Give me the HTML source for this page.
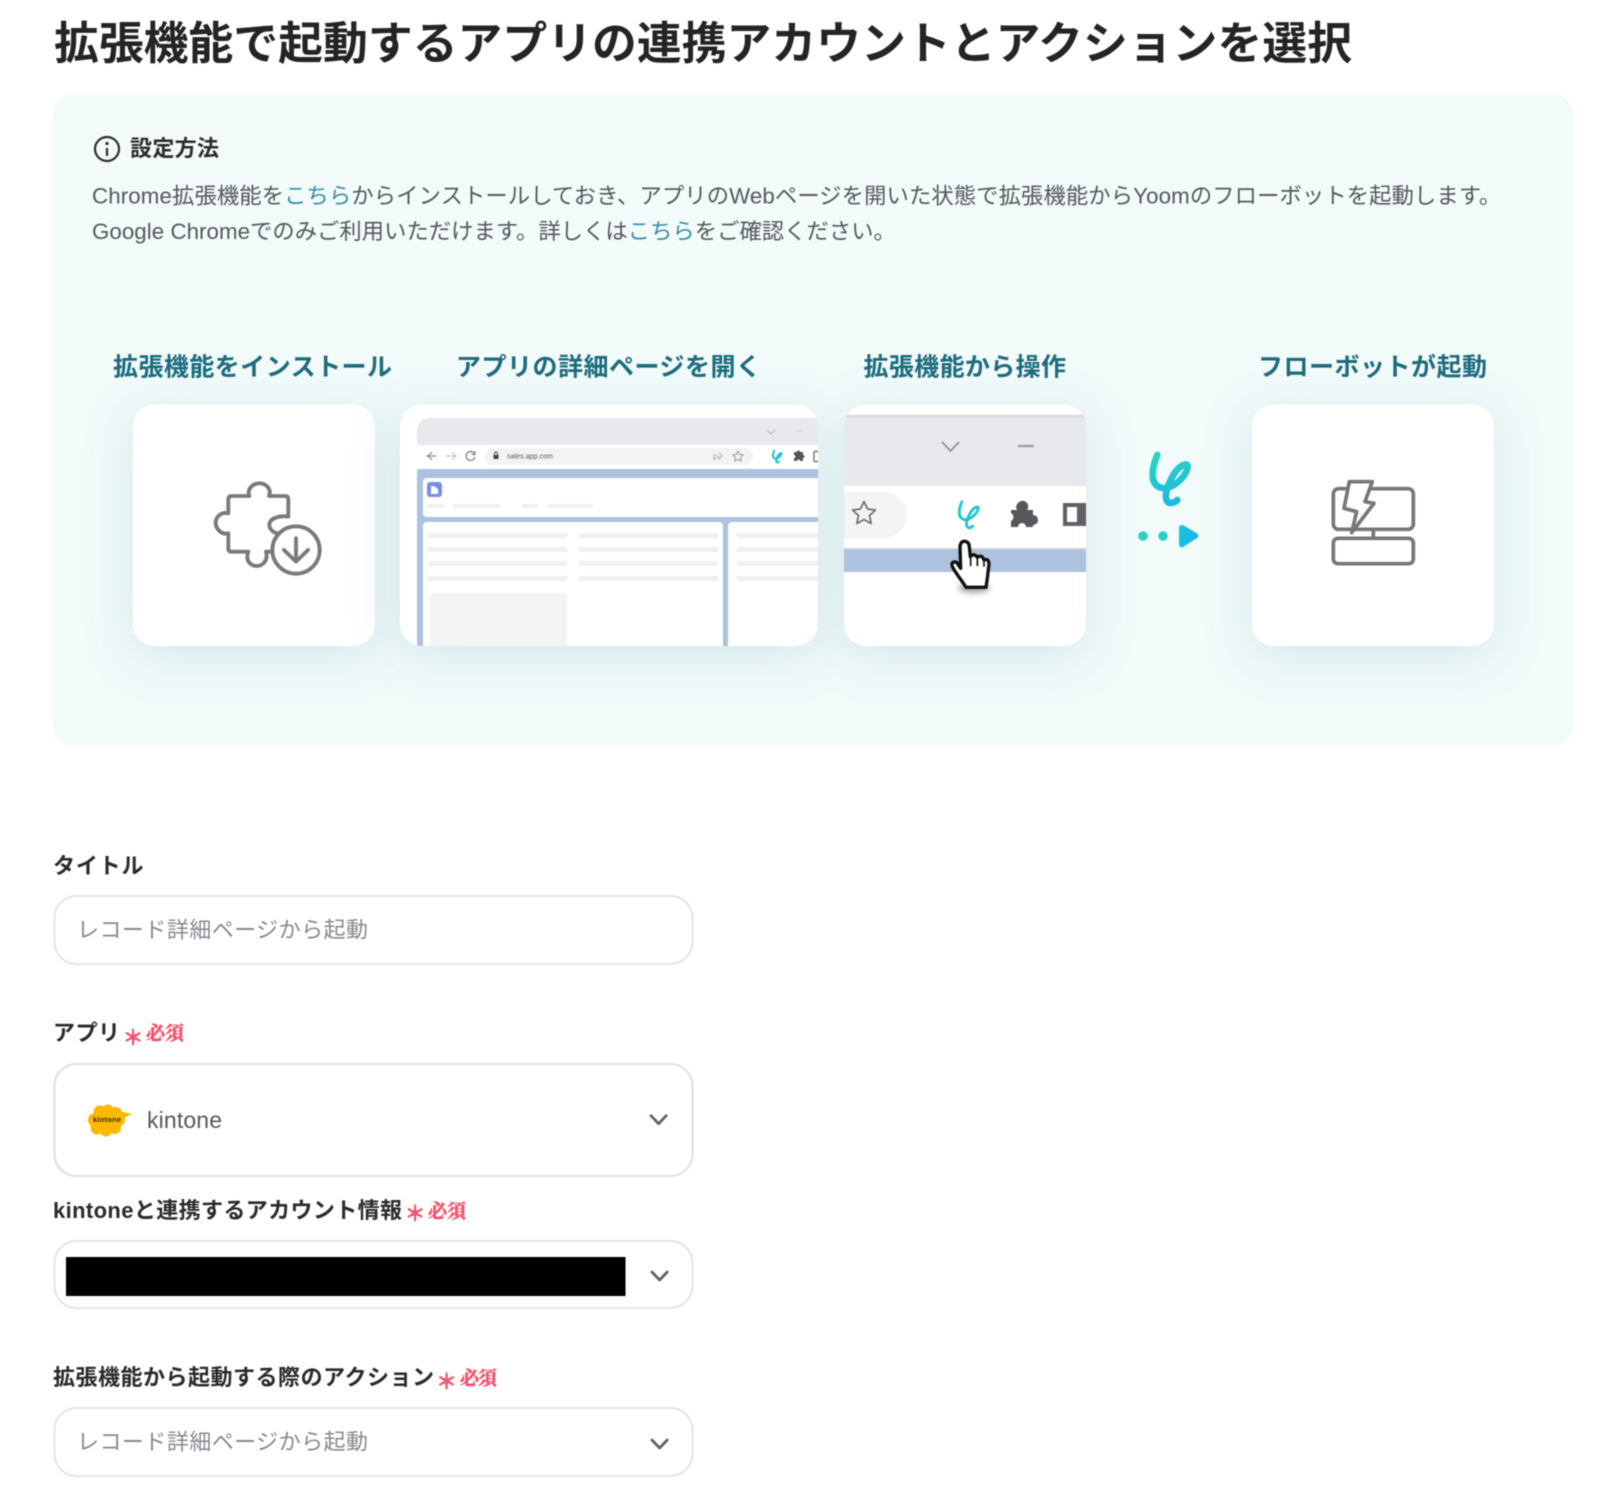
<!DOCTYPE html>
<html lang="ja"><head><meta charset="utf-8"><title>拡張機能で起動するアプリの連携アカウントとアクションを選択</title>
<style>
html,body{margin:0;padding:0;background:#fff;width:1600px;height:1495px;overflow:hidden}
svg{display:block;filter:blur(.5px)}
text{font-family:"Liberation Sans","Noto Sans CJK JP",sans-serif;white-space:pre}
.b{font-weight:700}
.step{font-size:25px;font-weight:700;fill:#1c6c7e}
.lab{font-size:22px;font-weight:700;fill:#2a2a2a}
.ph{font-size:22px;fill:#858a8f}
.req{font-family:"Liberation Serif","Noto Serif CJK SC",serif;font-size:19px;font-weight:700;fill:#fb4f6c;stroke:#fb4f6c;stroke-width:.5}
.ast{font-family:"Noto Sans CJK JP",sans-serif;font-size:21px;font-weight:700;fill:#fb4f6c;stroke:#fb4f6c;stroke-width:.4}
.box{fill:#fff;stroke:#e2e5e8;stroke-width:2}
.chev{fill:none;stroke:#5f6468;stroke-width:2.8;stroke-linecap:round;stroke-linejoin:round}
.ln{fill:#f0f0f0}
</style></head><body>
<svg width="1600" height="1495" viewBox="0 0 1600 1495" xmlns="http://www.w3.org/2000/svg">
<defs>
<filter id="sh" x="-60%" y="-60%" width="220%" height="230%"><feDropShadow dx="0" dy="10" stdDeviation="24" flood-color="#4f9aa3" flood-opacity=".19"/></filter>
<filter id="hs" x="-50%" y="-50%" width="200%" height="200%"><feGaussianBlur stdDeviation="3"/></filter>
<linearGradient id="yg" gradientUnits="userSpaceOnUse" x1="100" y1="35" x2="150" y2="195"><stop offset="0" stop-color="#2dd6bb"/><stop offset="1" stop-color="#1bb9e6"/></linearGradient>
<linearGradient id="tg" x1="0" y1="0" x2="1" y2="1"><stop offset="0" stop-color="#1bc6dc"/><stop offset="1" stop-color="#1ab2ea"/></linearGradient>
<clipPath id="c2"><rect x="400" y="404.500" width="418" height="241.500" rx="22"/></clipPath>
<clipPath id="c3"><rect x="844" y="404.500" width="242" height="241.500" rx="22"/></clipPath>
</defs>

<text x="54" y="59" class="b" font-size="44.8" fill="#242424" textLength="1298">拡張機能で起動するアプリの連携アカウントとアクションを選択</text>

<rect x="53" y="94" width="1520" height="651.500" rx="20" fill="#f2fafa"/>

<circle cx="107" cy="149" r="12" fill="none" stroke="#2f2f2f" stroke-width="2.2"/>
<circle cx="107" cy="143.5" r="1.6" fill="#2f2f2f"/><path d="M107 148v8" stroke="#2f2f2f" stroke-width="2.2" fill="none"/>
<text x="130" y="156" class="b" font-size="22" fill="#2c2c2c" textLength="89">設定方法</text>

<text x="92" y="203.5" font-size="22.3" letter-spacing=".12" fill="#55595c">Chrome拡張機能を<tspan fill="#3a8fa8">こちら</tspan>からインストールしておき、アプリのWebページを開いた状態で拡張機能からYoomのフローボットを起動します。</text>
<text x="92" y="239" font-size="22.3" letter-spacing=".05" fill="#55595c">Google Chromeでのみご利用いただけます。詳しくは<tspan fill="#3a8fa8">こちら</tspan>をご確認ください。</text>

<text x="113" y="375.5" class="step" textLength="279">拡張機能をインストール</text>
<text x="456" y="375.5" class="step" textLength="305">アプリの詳細ページを開く</text>
<text x="863.5" y="375.5" class="step" textLength="202.5">拡張機能から操作</text>
<text x="1258" y="375.5" class="step" textLength="229">フローボットが起動</text>

<!-- cards -->
<rect x="133" y="404.500" width="242" height="241.500" rx="22" fill="#fff" filter="url(#sh)"/>
<rect x="400" y="404.500" width="418" height="241.500" rx="22" fill="#fff" filter="url(#sh)"/>
<rect x="844" y="404.500" width="242" height="241.500" rx="22" fill="#fff" filter="url(#sh)"/>
<rect x="1252" y="404.500" width="242" height="241.500" rx="22" fill="#fff" filter="url(#sh)"/>

<!-- puzzle download icon -->
<g transform="translate(200 470) scale(.33333)" fill="none" stroke="#7a7a7a" stroke-width="11.5" stroke-linejoin="round" stroke-linecap="round">
<path d="M212 245H198C205 270 190 288 170 288C150 288 135 270 145 245H95Q85 245 85 235V190C65 195 47 178 47 158C47 140 65 125 85 130V88Q85 78 95 78H148C140 55 160 40 178 40C196 40 216 55 207 78H255Q265 78 265 88V140C240 135 208 145 208 165C208 178 222 190 235 190"/>
<circle cx="288" cy="240" r="71"/>
<path d="M288 205V272M252 240L288 275L324 240"/>
</g>

<!-- browser card -->
<g clip-path="url(#c2)">
<path d="M417 646V432Q417 418 431 418H818V646Z" fill="#e8e9ec"/>
<rect x="417" y="445" width="401" height="24" fill="#fff"/>
<rect x="417" y="469" width="401" height="177" fill="#adc2de"/>
<path d="M423 513V482Q423 478 427 478H818V517H427Q423 517 423 513Z" fill="#fff"/>
<rect x="423" y="522" width="300" height="130" rx="4" fill="#fff"/>
<rect x="728" y="522" width="100" height="130" rx="4" fill="#fff"/>
<rect x="485" y="448" width="268" height="17" rx="8.5" fill="#f2f3f5"/>
<text x="507" y="458.5" font-size="7" fill="#555" textLength="46">sales.app.com</text>
<path d="M426 456h10m-4-4l-4 4 4 4" fill="none" stroke="#8b8b8b" stroke-width="1.2"/>
<path d="M456 456h-10m6-4l4 4-4 4" fill="none" stroke="#c2c2c2" stroke-width="1.2"/>
<path d="M474 453a4.5 4.5 0 1 0 1 4M475 451v3.5h-3.5" fill="none" stroke="#7c7c7c" stroke-width="1.2"/>
<rect x="493.5" y="455" width="5" height="4" fill="#444"/><path d="M494.5 455v-1.5a1.5 1.5 0 0 1 3 0V455" fill="none" stroke="#444"/>
<path d="M714 460v-5h3m2-2l3 3-3 3v-2q-4 0-5 3" fill="none" stroke="#b0b0b0" stroke-width="1"/>
<path d="M738 451l1.6 3.3 3.6.5-2.6 2.5.6 3.6-3.2-1.7-3.2 1.7.6-3.6-2.6-2.5 3.6-.5z" fill="none" stroke="#9a9a9a"/>
<path d="M767 430l4 4 4-4" fill="none" stroke="#b9b9b9" stroke-width="1.2"/>
<path d="M796 431h6" stroke="#d0d0d0" stroke-width="1.2"/>
<g transform="translate(765.2 447.2) scale(.08)"><path d="M112 45C95 85 90 125 115 140C150 160 205 105 203 78C200 65 175 80 160 105C140 140 130 175 145 187C155 192 165 187 172 180" fill="none" stroke="#26c4d6" stroke-width="26" stroke-linecap="round"/></g>
<path d="M794 452h3a1.5 1.5 0 0 1 3 0h3v3a1.5 1.5 0 0 1 0 3v3h-3a1.5 1.5 0 0 0-3 0h-3v-3a1.5 1.5 0 0 0 0-3z" fill="#555"/>
<rect x="814" y="451.5" width="8" height="10" rx="1" fill="none" stroke="#777" stroke-width="1.4"/>
<rect x="427" y="482" width="15" height="15" rx="3" fill="#7b8ce8"/><path d="M431 486h3l4 3v5h-7z" fill="#fff"/>
<g class="ln">
<rect x="428" y="504" width="17" height="4" rx="2"/><rect x="453" y="504" width="47" height="4" rx="2"/><rect x="522" y="504" width="16" height="4" rx="2"/><rect x="547" y="504" width="46" height="4" rx="2"/>
<rect x="428" y="533" width="139" height="5"/><rect x="579" y="533" width="139" height="5"/><rect x="737" y="533" width="85" height="5"/>
<rect x="428" y="547" width="139" height="5"/><rect x="579" y="547" width="139" height="5"/><rect x="737" y="547" width="85" height="5"/>
<rect x="428" y="561" width="139" height="5"/><rect x="579" y="561" width="139" height="5"/><rect x="737" y="561" width="85" height="5"/>
<rect x="428" y="576" width="139" height="5"/><rect x="579" y="576" width="139" height="5"/><rect x="737" y="576" width="85" height="5"/>
</g>
<rect x="430" y="593" width="137" height="60" fill="#f3f3f3"/>
</g>

<!-- toolbar card -->
<g clip-path="url(#c3)">
<rect x="843" y="415" width="243" height="71" fill="#e8e9ec"/>
<rect x="843" y="415" width="243" height="2" fill="#d5d5d6"/>
<path d="M942 442l8.500 9 8.500-9" fill="none" stroke="#8f9092" stroke-width="1.700"/>
<path d="M1018 446h16" stroke="#9b9c9e" stroke-width="2.200"/>
<path d="M843 492H884A23 23 0 0 1 884 538H843Z" fill="#f3f4f6"/>
<path d="M864 501.500l3.500 7.500 8 1-6 5.500 1.600 8-7.100-4-7.100 4 1.600-8-6-5.500 8-1z" fill="none" stroke="#6f7072" stroke-width="1.700" stroke-linejoin="round"/>
<g transform="translate(941.700 493.700) scale(.18)"><path d="M112 45C95 85 90 125 115 140C150 160 205 105 203 78C200 65 175 80 160 105C140 140 130 175 145 187C155 192 165 187 172 180" fill="none" stroke="#22c4d6" stroke-width="16" stroke-linecap="round"/></g>
<path d="M1011 510h6a5.500 5.500 0 0 1 1-7 5.500 5.500 0 0 1 9 7h6v5a5 5 0 0 1 3 9 5 5 0 0 1-3 1v2h-7a4 4 0 0 0-8 0h-7v-6a4.500 4.500 0 0 0 0-8z" fill="#56585c"/>
<rect x="1063" y="503" width="23" height="23" fill="#5f6166"/><rect x="1067" y="507" width="10" height="15" fill="#fff"/>
<rect x="843" y="549" width="243" height="23" fill="#adc2de"/>
<rect x="843" y="548" width="243" height="1.500" fill="#d3d5d8"/>
</g>
<ellipse cx="974" cy="588" rx="16" ry="5" fill="#000" opacity=".35" filter="url(#hs)"/>
<g transform="translate(840 400) scale(.33333)">
<path d="M362 505L360 440Q362 422 375 424Q387 426 388 440L391 470Q402 458 412 472Q425 462 432 480Q446 474 447 492L442 535L438 562H378C365 540 350 525 337 500Q332 482 350 487Z" fill="#fff" stroke="#111" stroke-width="10" stroke-linejoin="round"/>
<path d="M392 472V498M412 474V498M432 482V500" fill="none" stroke="#111" stroke-width="5"/>
</g>

<!-- yoom logo + arrow -->
<g transform="translate(1120 440) scale(.33333)"><path d="M112 45C95 85 90 125 115 140C150 160 205 105 203 78C200 65 175 80 160 105C140 140 130 175 145 187C155 192 165 187 172 180" fill="none" stroke="url(#yg)" stroke-width="20" stroke-linecap="round" stroke-linejoin="round"/></g>
<circle cx="1143" cy="536" r="4.800" fill="#2ad2c6"/><circle cx="1163" cy="536" r="4.800" fill="#2ad2c6"/>
<path d="M1182 525Q1179 525 1179 528V544Q1179 548 1183 547L1197 538Q1200 535.500 1197 533.500L1184 525.500Q1183 525 1182 525Z" fill="url(#tg)"/>

<!-- bolt server icon -->
<g transform="translate(1120 440) scale(.33333)" fill="none" stroke="#777" stroke-width="11" stroke-linejoin="round">
<rect x="640" y="146" width="240" height="122" rx="16"/>
<rect x="640" y="295" width="240" height="76" rx="14"/>
<path d="M760 268V295"/>
<path d="M688 125H757L735 185L762 190L695 278L710 215L672 205Z" fill="#fff"/>
</g>

<!-- form -->
<text x="53" y="873.500" class="lab" textLength="90.500">タイトル</text>
<rect x="54.500" y="896" width="638" height="68" rx="22" class="box"/>
<text x="77" y="937.500" class="ph" textLength="291">レコード詳細ページから起動</text>

<text x="53" y="1040.500" class="lab" textLength="67">アプリ</text>
<text x="133" y="1045" class="ast" text-anchor="middle">＊</text>
<text x="146" y="1039.500" class="req" textLength="38">必須</text>
<rect x="54.500" y="1064" width="638" height="112" rx="22" class="box" style="stroke:#dfe0e2"/>
<g fill="#fdb800">
<circle cx="107" cy="1120" r="14"/><circle cx="100" cy="1112" r="6.500"/><circle cx="108" cy="1110.500" r="6"/><circle cx="116" cy="1113" r="6"/><circle cx="95" cy="1120" r="7"/><circle cx="97" cy="1128" r="6.500"/><circle cx="106" cy="1130.500" r="6"/><circle cx="115" cy="1128" r="6"/><circle cx="119" cy="1120" r="6"/>
<path d="M118 1111L132 1114L122 1119Z"/>
</g>
<text x="107" y="1122" font-size="7.500" font-weight="700" fill="#3a2c00" text-anchor="middle" textLength="28">kintone</text>
<text x="147" y="1128" font-size="23" fill="#55595c" textLength="75">kintone</text>
<path d="M651 1115.700l7.600 8 7.600-8" class="chev"/>

<text x="53" y="1218" class="lab" textLength="349">kintoneと連携するアカウント情報</text>
<text x="415" y="1221" class="ast" text-anchor="middle">＊</text>
<text x="428" y="1217.500" class="req" textLength="38">必須</text>
<rect x="54.500" y="1241" width="638" height="67" rx="22" class="box"/>
<rect x="66" y="1257" width="559.500" height="39" fill="#000"/>
<path d="M652 1272l7.600 8 7.600-8" class="chev"/>

<text x="53" y="1385" class="lab" textLength="381">拡張機能から起動する際のアクション</text>
<text x="446.500" y="1389" class="ast" text-anchor="middle">＊</text>
<text x="460" y="1384.500" class="req" textLength="37">必須</text>
<rect x="54.500" y="1408" width="638" height="68" rx="22" class="box"/>
<text x="77" y="1449.500" class="ph" textLength="291">レコード詳細ページから起動</text>
<path d="M652 1440l7.600 8 7.600-8" class="chev"/>
</svg>
</body></html>
